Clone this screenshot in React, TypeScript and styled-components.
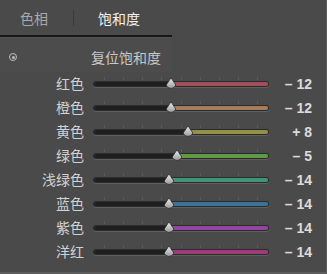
import React from "react";
import styled, { createGlobalStyle } from "styled-components";

const GlobalStyle = createGlobalStyle`
  html, body {
    margin: 0;
    padding: 0;
    background: #4a4a4a;
  }
`;

interface Channel {
  name: string;
  value: number;
  color: string;
}

const channels: Channel[] = [
  { name: "红色", value: -12, color: "#a0505a" },
  { name: "橙色", value: -12, color: "#a27e5c" },
  { name: "黄色", value: 8, color: "#939049" },
  { name: "绿色", value: -5, color: "#629a44" },
  { name: "浅绿色", value: -14, color: "#3f9574" },
  { name: "蓝色", value: -14, color: "#3c7398" },
  { name: "紫色", value: -14, color: "#9445a4" },
  { name: "洋红", value: -14, color: "#9c3d7a" },
];

const formatValue = (v: number) => (v > 0 ? `+ ${v}` : v < 0 ? `– ${Math.abs(v)}` : "0");

function Thumb() {
  return (
    <ThumbSvg width="12" height="14" viewBox="0 0 12 14">
      <defs>
        <linearGradient id="thumbGrad" x1="0" y1="0" x2="0" y2="1">
          <stop offset="0" stopColor="#eeeeee" />
          <stop offset="1" stopColor="#9a9a9a" />
        </linearGradient>
      </defs>
      <path
        d="M6 0.8 L10.8 8 A5 4.8 0 0 1 1.2 8 Z"
        fill="url(#thumbGrad)"
        stroke="#2a2a2a"
        strokeWidth="0.8"
      />
    </ThumbSvg>
  );
}

function SliderRow({ name, value, color }: Channel) {
  const pct = 50 + value / 2;
  return (
    <Row>
      <Label>{name}</Label>
      <Slider>
        <Ticks>
          {Array.from({ length: 9 }).map((_, i) => (
            <Tick key={i} />
          ))}
        </Ticks>
        <Track>
          <TrackLeft style={{ width: `${pct}%` }} />
          <TrackRight $color={color} />
        </Track>
        <ThumbWrap style={{ left: `${pct}%` }}>
          <Thumb />
        </ThumbWrap>
      </Slider>
      <Value>{formatValue(value)}</Value>
    </Row>
  );
}

export default function App() {
  return (
    <>
      <GlobalStyle />
      <Panel>
        <TabBar>
          <Tab>色相</Tab>
          <TabDivider />
          <Tab $active>饱和度</Tab>
        </TabBar>
        <ResetRow>
          <ResetIcon />
          <ResetText>复位饱和度</ResetText>
        </ResetRow>
        <Rows>
          {channels.map((c) => (
            <SliderRow key={c.name} {...c} />
          ))}
        </Rows>
      </Panel>
    </>
  );
}

const Panel = styled.div`
  width: 327px;
  height: 274px;
  box-sizing: border-box;
  background: #4a4a4a;
  border-right: 1px solid #5a5a5a;
  border-bottom: 2px solid #5c5c5c;
  font-family: "Noto Sans CJK SC", "Noto Sans", sans-serif;
  overflow: hidden;
`;

const TabBar = styled.div`
  width: 172px;
  height: 37px;
  box-sizing: border-box;
  display: flex;
  align-items: center;
  border-bottom: 2px solid #161616;
  padding-left: 20px;
`;

const Tab = styled.div<{ $active?: boolean }>`
  font-size: 14px;
  line-height: 20px;
  color: ${(p) => (p.$active ? "#f2f2f2" : "#a8a8a8")};
`;

const TabDivider = styled.div`
  width: 1px;
  height: 16px;
  background: #3a3a3a;
  margin: 0 24px 0 25px;
`;

const ResetRow = styled.div`
  width: 172px;
  height: 35px;
  box-sizing: border-box;
  display: flex;
  align-items: center;
  border-top: 1px solid #535353;
  background: #4c4c4c;
  padding-left: 9px;
  padding-top: 4px;
`;

const ResetIcon = styled.div`
  width: 6px;
  height: 6px;
  border-radius: 50%;
  border: 1.5px solid #bdbdbd;
  box-sizing: content-box;
  position: relative;
  &::after {
    content: "";
    position: absolute;
    left: 1.5px;
    top: 1.5px;
    width: 3px;
    height: 3px;
    border-radius: 50%;
    background: #bdbdbd;
  }
`;

const ResetText = styled.div`
  margin-left: 74px;
  font-size: 14px;
  color: #c8c8c8;
`;

const Rows = styled.div`
  display: flex;
  flex-direction: column;
`;

const Row = styled.div`
  display: grid;
  grid-template-columns: 84px 174px 1fr;
  column-gap: 10px;
  align-items: center;
  height: 24px;
`;

const Label = styled.div`
  text-align: right;
  font-size: 14px;
  color: #d2d2d2;
  padding-bottom: 2px;
`;

const Slider = styled.div`
  position: relative;
  height: 24px;
  display: flex;
  align-items: center;
`;

const Ticks = styled.div`
  position: absolute;
  left: 10px;
  right: 10px;
  top: 5px;
  display: flex;
  justify-content: space-between;
`;

const Tick = styled.div`
  width: 1px;
  height: 3px;
  background: #5a5a5a;
`;

const Track = styled.div`
  width: 100%;
  height: 4px;
  border-radius: 3px;
  display: flex;
  overflow: hidden;
  box-shadow: 0 0 0 1px #2a2a2a, 0 1px 0 1px rgba(255, 255, 255, 0.12);
`;

const TrackLeft = styled.div`
  height: 100%;
  background: #1f1f1f;
`;

const TrackRight = styled.div<{ $color: string }>`
  flex: 1;
  height: 100%;
  background: ${(p) => p.$color};
`;

const ThumbWrap = styled.div`
  position: absolute;
  top: 5px;
  transform: translateX(-50%);
  width: 12px;
  height: 14px;
`;

const ThumbSvg = styled.svg`
  display: block;
`;

const Value = styled.div`
  text-align: right;
  padding-right: 14px;
  font-family: "Liberation Sans", Arial, sans-serif;
  font-weight: 700;
  font-size: 14px;
  color: #dcdcdc;
  white-space: pre;
`;
